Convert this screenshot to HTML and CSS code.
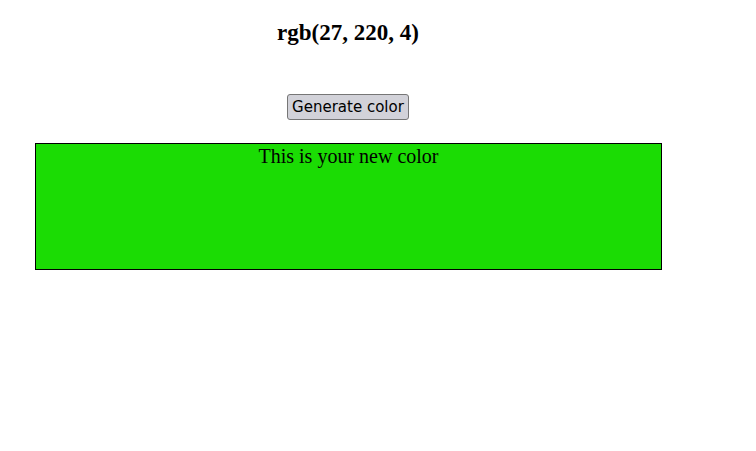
FILE: index.html
```html
<!DOCTYPE html>
<html>
<head>
<meta charset="utf-8">
<link rel="stylesheet" href="styles.css">
</head>
<body>
<div class="app">
  <h2 class="title">rgb(27, 220, 4)</h2>
  <div class="actions"><button class="gen">Generate color</button></div>
  <div class="swatch" style="background: rgb(27, 220, 4);">This is your new color</div>
</div>
</body>
</html>
```
FILE: styles.css
```css
body {
  margin: 8px;
  font-family: "Liberation Serif", serif;
  background: #fff;
}
.app {
  width: 680px;
  text-align: center;
}
.title {
  font-size: 23px;
  font-weight: bold;
  margin: 11px 0 0;
  line-height: 28px;
}
.actions {
  margin-top: 47px;
  height: 26px;
}
.gen {
  font-family: "DejaVu Sans", sans-serif;
  font-size: 15px;
  white-space: nowrap;
  height: 26px;
  width: 122px;
  padding: 0;
  background: #d2d2d9;
  border: 1px solid #767676;
  border-radius: 3px;
  color: #000;
}
.swatch {
  margin: 23px 0 0 27px;
  width: 627px;
  height: 127px;
  box-sizing: border-box;
  border: 1px solid #000;
  font-size: 20px;
  line-height: 24px;
  text-align: center;
}
```
